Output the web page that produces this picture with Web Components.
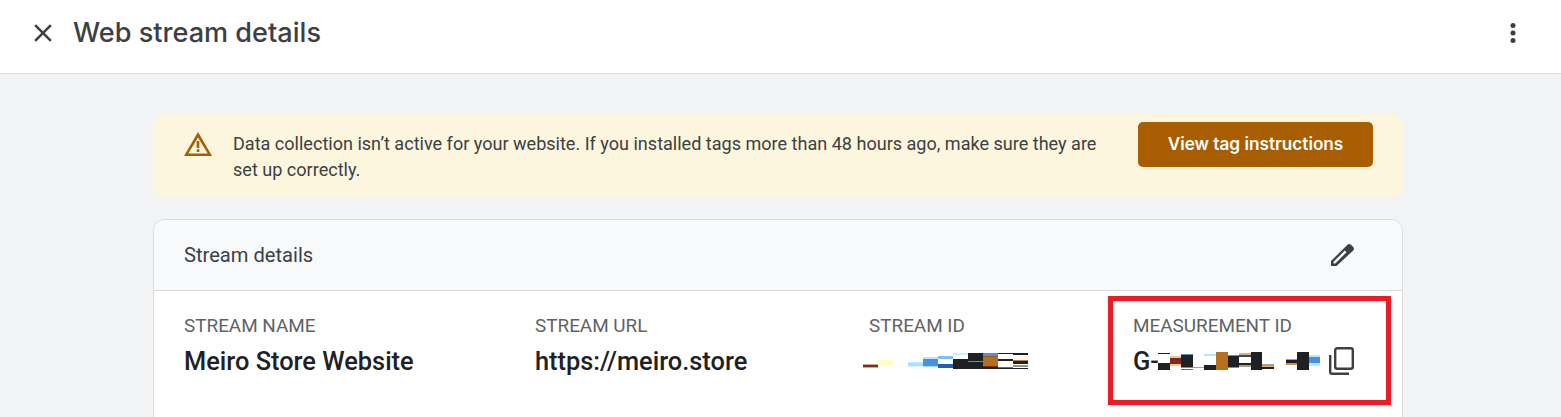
<!DOCTYPE html>
<html>
<head>
<meta charset="utf-8">
<title>Web stream details</title>
<style>
  html, body { margin: 0; height: 100%; overflow: hidden; background: #f1f3f4; }
  body { font-family: Roboto, "Liberation Sans", sans-serif; color: #3c4043; }
</style>
</head>
<body>
<stream-page></stream-page>

<script>
const ICONS = {
  close: '<path d="M19 6.41 17.59 5 12 10.59 6.41 5 5 6.41 10.59 12 5 17.59 6.41 19 12 13.41 17.59 19 19 17.59 13.41 12z"/>',
  more: '<circle cx="12" cy="6" r="2"/><circle cx="12" cy="12" r="2"/><circle cx="12" cy="18" r="2"/>',
  warning: '<path fill-rule="evenodd" d="M15 3 1 27h28L15 3zm0 5.6L24.7 24.4H5.3L15 8.6z"/><path d="M13.7 12h2.6v7h-2.6zM13.7 20.2h2.6v2.8h-2.6z"/>',
  edit: '<path fill-rule="evenodd" d="M4 26v-5L20.5 4.8c1-1 2.5-1 3.5 0L26.2 7c1 1 1 2.5 0 3.5L9.5 26H4zM6.5 23.5h1.8L19.5 12.3l-1.7-1.7L6.5 21.8v1.7z"/>',
  copy: '<g fill="none" stroke="currentColor" stroke-width="2.4"><rect x="11.2" y="4.2" width="17.6" height="20.6" rx="2"/><path d="M6.2 11v17q0 1.8 1.8 1.8h17"/></g>'
};

class AppIcon extends HTMLElement {
  constructor() {
    super();
    const size = this.getAttribute('size') || 30;
    const box = this.getAttribute('box') || 24;
    const root = this.attachShadow({ mode: 'open' });
    root.innerHTML = `
      <style>
        :host { display: block; width: ${size}px; height: ${size}px; flex: none; }
        svg { display: block; width: 100%; height: 100%; fill: currentColor; }
      </style>
      <svg viewBox="0 0 ${box} ${box}">${ICONS[this.getAttribute('name')]}</svg>`;
  }
}
customElements.define('app-icon', AppIcon);

// the blurred ids: each cell is a list of [colour, from, to] bands
const D = '#1f2023';
const STRIPS = {
  stream: [
    [['#c8b090', 11, 12], ['#7a2a20', 12, 14], ['#c8b090', 14, 15]],
    [['#ffffc0', 7, 13]],
    [],
    [['#c4ecff', 9, 10], ['#a8e0ff', 10, 13], ['#d4f2ff', 13, 14]],
    [['#b0e8ff', 4, 6], ['#4a90e0', 6, 13], ['#a8d8f8', 13, 14]],
    [['#80c0f0', 3, 6], ['#ffffff', 6, 11], ['#2060b0', 11, 15]],
    [['#c0f8ff', 0, 2], ['#ffffff', 2, 6], [D, 6, 16]],
    [[D, 0, 8], ['#5a90c0', 8, 9], [D, 9, 16]],
    [['#5a90c0', 0, 3], ['#8a6030', 3, 4], ['#b5701f', 4, 13], ['#7a2a20', 13, 14], [D, 14, 16]],
    [[D, 0, 1], ['#ffffff', 1, 6], [D, 6, 8], ['#ffffff', 8, 14], ['#a06020', 14, 15], [D, 15, 16]],
    [[D, 0, 2], ['#ffffff', 2, 7], ['#c08030', 7, 8], [D, 8, 11], ['#ffffff', 11, 12], ['#909090', 12, 14], [D, 15, 16]]
  ],
  measurement: [
    [['#ffffff', 0, 1], [D, 1, 2], ['#ffffff', 2, 11], [D, 11, 18]],
    [['#f0c890', 4, 6], ['#7a2a20', 6, 12], ['#f0c890', 12, 14]],
    [['#5a90c0', 2, 3], [D, 3, 15], ['#5a90e0', 15, 16], ['#a06020', 17, 18]],
    [['#a0a0a0', 15, 16]],
    [['#b0e8ff', 2, 4], ['#ffffff', 4, 11], [D, 13, 18]],
    [['#b5701f', 0, 18]],
    [['#5a90e0', 3, 4], [D, 4, 15], ['#5a90e0', 15, 16]],
    [['#e0b070', 1, 3], ['#2a4a80', 3, 5], ['#ffffff', 5, 11], [D, 11, 13], ['#a0a0a0', 13, 15]],
    [[D, 0, 18]],
    [['#a0a0a0', 12, 14], ['#e0b070', 14, 15], [D, 15, 17]],
    [],
    [['#60b0f0', 7, 8], [D, 8, 11], ['#d09050', 11, 13]],
    [[D, 0, 18]],
    [['#b0e8ff', 3, 5], ['#4a90e0', 5, 11], ['#b0e8ff', 11, 14]]
  ]
};

class RedactStrip extends HTMLElement {
  constructor() {
    super();
    const cells = STRIPS[this.getAttribute('strip')];
    const w = this.getAttribute('cell');
    const h = this.getAttribute('rows');
    const root = this.attachShadow({ mode: 'open' });
    const html = cells.map((bands) => {
      let last = 0;
      const parts = [];
      bands.forEach(([c, a, b]) => {
        if (a > last) parts.push(`transparent ${last}px ${a}px`);
        parts.push(`${c} ${a}px ${b}px`);
        last = b;
      });
      parts.push(`transparent ${last}px`);
      const bg = bands.length ? `linear-gradient(${parts.join(',')})` : 'none';
      return `<i style="background:${bg}"></i>`;
    }).join('');
    root.innerHTML = `
      <style>
        :host { display: flex; height: ${h}px; flex: none; }
        i { display: block; width: ${w}px; height: 100%; }
      </style>${html}`;
  }
}
customElements.define('redact-strip', RedactStrip);

const topTemplate = document.createElement('template');
topTemplate.innerHTML = `
  <style>
    :host {
      display: flex; align-items: center; height: 66px;
      padding: 0 33px 7px 28px; background: #fff; border-bottom: 1px solid #dadce0; color: #3c4043;
    }
    h1 {
      flex: 1; margin: 0 0 0 15px; font: 500 27.1px/32px Inter, sans-serif; color: #3c4043;
    }
  </style>
  <app-icon name="close"></app-icon>
  <h1><slot></slot></h1>
  <app-icon name="more"></app-icon>`;

class TopBar extends HTMLElement {
  constructor() {
    super();
    this.attachShadow({ mode: 'open' }).appendChild(topTemplate.content.cloneNode(true));
  }
}
customElements.define('top-bar', TopBar);

const bannerTemplate = document.createElement('template');
bannerTemplate.innerHTML = `
  <style>
    :host {
      display: flex; align-items: flex-start; box-sizing: border-box; height: 84px;
      padding: 8px 30px 0 30px; border-radius: 12px; background: #fdf6de;
    }
    app-icon { color: #a85d00; margin-top: 7px; }
    p {
      flex: 1; margin: 9px 30px 0 20px; font-size: 18.06px; line-height: 26px; color: #3c4043;
    }
    button {
      flex: none; width: 235px; height: 45px; border: 0; border-radius: 5px; padding: 0 0 2px;
      background: #a85d00; color: #fff; font: 600 17.2px Inter, sans-serif;
    }
  </style>
  <app-icon name="warning" box="30"></app-icon>
  <p><slot></slot></p>
  <button>View tag instructions</button>`;

class WarnBanner extends HTMLElement {
  constructor() {
    super();
    this.attachShadow({ mode: 'open' }).appendChild(bannerTemplate.content.cloneNode(true));
  }
}
customElements.define('warn-banner', WarnBanner);

const fieldTemplate = document.createElement('template');
fieldTemplate.innerHTML = `
  <style>
    :host { display: block; }
    .label { font-size: 18.9px; line-height: 26px; color: #5f6368; }
    .value {
      display: flex; align-items: center; height: 36px; margin-top: 4px;
      font-size: 25.4px; font-weight: 500; color: #202124;
    }
  </style>
  <div class="label"><slot name="label"></slot></div>
  <div class="value"><slot></slot></div>`;

class StreamField extends HTMLElement {
  constructor() {
    super();
    this.attachShadow({ mode: 'open' }).appendChild(fieldTemplate.content.cloneNode(true));
  }
}
customElements.define('stream-field', StreamField);

const cardTemplate = document.createElement('template');
cardTemplate.innerHTML = `
  <style>
    :host {
      display: block; position: relative; margin-top: 21px; height: 260px;
      background: #fff; border: 1px solid #dadce0; border-radius: 12px;
    }
    header {
      display: flex; align-items: center; justify-content: space-between; height: 70px;
      padding: 0 45px 0 30px; background: #f8f9fa; border-bottom: 1px solid #dadce0;
      border-radius: 12px 12px 0 0; font-size: 20.15px; color: #3c4043;
    }
    .fields {
      display: grid; grid-template-columns: 351px 334px 264px 1fr;
      padding: 22px 30px 0 30px;
    }
    .mark {
      position: absolute; left: 954px; top: 76px; width: 283px; height: 109px;
      box-sizing: border-box; border: 5px solid #ed1c24; pointer-events: none;
    }
  </style>
  <header><slot name="title"></slot><app-icon name="edit" box="30"></app-icon></header>
  <div class="fields"><slot></slot></div>
  <div class="mark"></div>`;

class StreamCard extends HTMLElement {
  constructor() {
    super();
    this.attachShadow({ mode: 'open' }).appendChild(cardTemplate.content.cloneNode(true));
  }
}
customElements.define('stream-card', StreamCard);

const pageTemplate = document.createElement('template');
pageTemplate.innerHTML = `
  <style>
    :host { display: block; }
    main { padding: 40px 158px 0 153px; }
    .id { display: flex; align-items: center; }
    .gid { flex: none; width: 25px; font-weight: 500; }
    .copy { margin-left: 4px; color: #3c4043; }
  </style>
  <top-bar>Web stream details</top-bar>
  <main>
    <warn-banner>Data collection isn’t active for your website. If you installed tags more than 48 hours ago, make sure they are set up correctly.</warn-banner>
    <stream-card>
      <span slot="title">Stream details</span>
      <stream-field><span slot="label">STREAM NAME</span>Meiro Store Website</stream-field>
      <stream-field><span slot="label">STREAM URL</span>https://meiro.store</stream-field>
      <stream-field><span slot="label">STREAM ID</span><redact-strip strip="stream" cell="15" rows="16" style="margin-left:-6px"></redact-strip></stream-field>
      <stream-field>
        <span slot="label">MEASUREMENT ID</span>
        <div class="id"><span class="gid">G-</span><redact-strip strip="measurement" cell="11.6" rows="18"></redact-strip><app-icon class="copy" name="copy" size="34" box="34"></app-icon></div>
      </stream-field>
    </stream-card>
  </main>`;

class StreamPage extends HTMLElement {
  constructor() {
    super();
    this.attachShadow({ mode: 'open' }).appendChild(pageTemplate.content.cloneNode(true));
  }
}
customElements.define('stream-page', StreamPage);
</script>
</body>
</html>
